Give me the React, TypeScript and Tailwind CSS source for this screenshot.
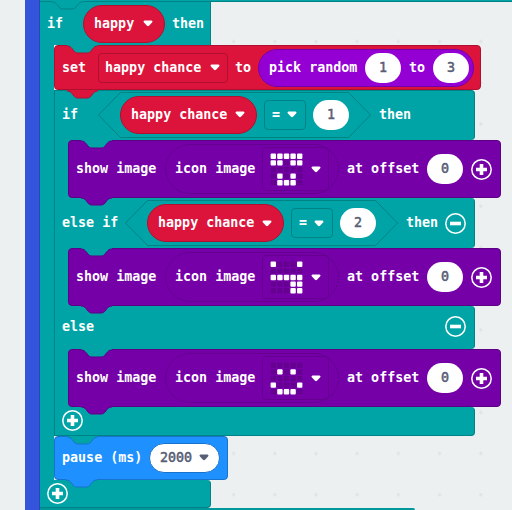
import React from "react";

type Kids = { children?: React.ReactNode };

function Tab({ fill, stroke }: { fill: string; stroke: string }) {
  return (
    <svg className="absolute -top-px left-3 z-10" width="32" height="10" viewBox="0 0 32 10">
      <path
        d="M0 1 C3 1 3.500 2 5 3.500 L7 6 C8 7.300 9 8 11 8 H20 C22 8 23 7.300 24 6 L26 3.500 C27.500 2 28 1 31 1 V0 H0 Z"
        fill={fill}
      />
      <path
        d="M0 1 C3 1 3.500 2 5 3.500 L7 6 C8 7.300 9 8 11 8 H20 C22 8 23 7.300 24 6 L26 3.500 C27.500 2 28 1 31 1"
        fill="none"
        stroke={stroke}
      />
    </svg>
  );
}

function Caret() {
  return (
    <svg className="shrink-0" width="10" height="7" viewBox="0 0 10 7">
      <path d="M1.500 .5 H8.500 Q10.200 1 9 2.500 L6 5.800 Q5 6.700 4 5.800 L1 2.500 Q-.2 1 1.500 .5Z" fill="currentColor" />
    </svg>
  );
}

function RoundButton({ plus, className = "" }: { plus?: boolean; className?: string }) {
  return (
    <svg className={"shrink-0 " + className} width="21" height="21" viewBox="0 0 21 21" stroke="white" fill="none">
      <circle cx="10.500" cy="10.500" r="9.700" strokeWidth="1.500" />
      <path d={plus ? "M5 10.500H16M10.500 5V16" : "M5 10.500H16"} strokeWidth="3.600" />
    </svg>
  );
}

function Num({ children, className = "" }: Kids & { className?: string }) {
  return (
    <span
      className={
        "flex h-[30px] w-9 shrink-0 items-center justify-center rounded-full bg-white text-[#575e75] " + className
      }
    >
      <span className="font-normal [-webkit-text-stroke:0.5px_#575e75]">{children}</span>
    </span>
  );
}

function Variable({ children, className }: Kids & { className: string }) {
  return (
    <span
      className={
        "flex h-[38px] shrink-0 items-center justify-between rounded-full border border-[#b0102f] bg-[#dc143c] pr-[11px] pl-[10px] " +
        className
      }
    >
      <span>{children}</span>
      <Caret />
    </span>
  );
}

function Comparison({ value }: { value: string }) {
  return (
    <div className="relative flex h-[46px] w-[273px] shrink-0 items-center pl-[22px]">
      <svg className="absolute inset-0" width="273" height="46" viewBox="0 0 273 46">
        <path d="M22.500 .5H250.500L272.500 23L250.500 45.500H22.500L.5 23Z" fill="#00a4a6" stroke="#008385" />
      </svg>
      <div className="relative flex items-center">
        <Variable className="w-[137px]">happy chance</Variable>
        <span className="ml-[7px] flex h-[30px] w-[42px] items-center justify-between rounded-[4px] border border-[#008385] pr-2 pl-[7px]">
          <span>=</span>
          <Caret />
        </span>
        <Num className="ml-[7px]">{value}</Num>
      </div>
    </div>
  );
}

function LedIcon({ rows }: { rows: string[] }) {
  return (
    <svg className="shrink-0" width="33" height="33" viewBox="0 0 33 33">
      {rows.map((row, y) =>
        row.split("").map((led, x) => (
          <rect
            key={`${x}-${y}`}
            x={0.6 + x * 6.6}
            y={0.6 + y * 6.6}
            width="5.400"
            height="5.400"
            rx="1"
            fill={led === "1" ? "#ffffff" : "#650091"}
          />
        )),
      )}
    </svg>
  );
}

function ShowImage({ rows }: { rows: string[] }) {
  return (
    <div className="relative ml-[13px] flex h-full w-[433px] items-center rounded-[4px] border border-[#5c0085] bg-[#7600a8] pl-[7px]">
      <Tab fill="#00a4a6" stroke="#5c0085" />
      <span className="w-[81px] shrink-0">show image</span>
      <div className="ml-2 flex h-[50px] w-[174px] shrink-0 items-center rounded-full border border-[#650091] pl-[9px]">
        <span className="w-[81px] shrink-0">icon image</span>
        <div className="ml-[6px] flex h-[44px] w-[67px] items-center justify-between rounded-[4px] border border-[#650091] pr-[7px] pl-[7px]">
          <LedIcon rows={rows} />
          <Caret />
        </div>
      </div>
      <span className="ml-2 w-[73px] shrink-0">at offset</span>
      <Num className="ml-[7px]">0</Num>
      <RoundButton plus className="ml-2" />
    </div>
  );
}

export default function App() {
  return (
    <main
      className="relative isolate flex h-[510px] w-[512px] overflow-hidden bg-[#ecf0f1] pl-[25px] text-[13.35px] leading-none font-bold whitespace-pre text-white"
      style={{ fontFamily: '"DejaVu Sans Mono", "Liberation Mono", monospace' }}
    >
      <svg className="absolute inset-0 -z-10" width="512" height="510">
        <defs>
          <pattern id="dots" x="7" y="20.900" width="41.200" height="41.200" patternUnits="userSpaceOnUse">
            <path d="M18.600 20.600h4M20.600 18.600v4" stroke="#dde1e3" strokeWidth="1.200" />
          </pattern>
        </defs>
        <rect width="512" height="510" fill="url(#dots)" />
      </svg>

      <div className="h-full w-[15px] shrink-0 border-r border-[#2a45b5] bg-[#3455db]" />

      <div className="flex w-[472px] shrink-0 flex-col">
        <div className="h-[2px] border-b border-[#008385] bg-[#00a4a6]" />

        <div className="relative flex h-[43px] w-[171px] items-center border-r border-[#008385] bg-[#00a4a6] pl-[7px]">
          <Tab fill="#00a4a6" stroke="#008385" />
          <span className="w-4">if</span>
          <Variable className="ml-5 w-[82px]">happy</Variable>
          <span className="ml-[7px]">then</span>
        </div>

        <div className="flex h-[435px]">
          <div className="w-[14px] shrink-0 bg-[#00a4a6]" />
          <div className="flex flex-col">
            <div className="relative flex h-[45px] w-[427px] items-center rounded-[4px] border border-[#b0102f] bg-[#dc143c] pl-[7px]">
              <Tab fill="#00a4a6" stroke="#b0102f" />
              <span className="w-6">set</span>
              <span className="ml-3 flex h-[30px] w-[130px] items-center justify-between rounded-[4px] border border-[#b0102f] pr-[7px] pl-[6px]">
                <span>happy chance</span>
                <Caret />
              </span>
              <span className="ml-[7px] w-4">to</span>
              <div className="ml-[7px] flex h-[38px] w-[216px] items-center rounded-full border border-[#7600a8] bg-[#9400d3] pl-[10px]">
                <span className="w-[89px]">pick random</span>
                <Num className="ml-[7px]">1</Num>
                <span className="ml-2 w-4">to</span>
                <Num className="ml-2">3</Num>
              </div>
            </div>

            <div className="flex h-[346px] flex-col">
              <div className="relative flex h-[50px] w-[421px] items-center rounded-tr-[4px] rounded-br-[4px] border border-b-0 border-[#008385] bg-[#00a4a6] pb-[2px] pl-[7px]">
                <Tab fill="#dc143c" stroke="#b0102f" />
                <span className="w-4">if</span>
                <div className="ml-5"><Comparison value="1" /></div>
                <span className="ml-2">then</span>
              </div>
              <div className="h-[58px] w-[421px] border-l border-[#008385] bg-[#00a4a6]">
                <ShowImage rows={["11111", "11011", "00000", "01010", "01110"]} />
              </div>

              <div className="relative flex h-[50px] w-[421px] items-center rounded-r-[4px] border-r border-l border-[#008385] bg-[#00a4a6] pl-[7px]">
                <div className="absolute top-0 left-[14px]">
                  <Tab fill="#7600a8" stroke="#5c0085" />
                </div>
                <span className="w-[57px]">else if</span>
                <div className="ml-[6px]"><Comparison value="2" /></div>
                <span className="ml-2 w-[33px]">then</span>
                <RoundButton className="ml-[6px]" />
              </div>
              <div className="h-[58px] w-[421px] border-l border-[#008385] bg-[#00a4a6]">
                <ShowImage rows={["10001", "00000", "11111", "00011", "00011"]} />
              </div>

              <div className="relative flex h-[43px] w-[421px] items-center justify-between rounded-r-[4px] border-r border-l border-[#008385] bg-[#00a4a6] pr-2 pb-[2px] pl-[7px]">
                <div className="absolute top-0 left-[14px]">
                  <Tab fill="#7600a8" stroke="#5c0085" />
                </div>
                <span>else</span>
                <RoundButton />
              </div>
              <div className="h-[58px] w-[421px] border-l border-[#008385] bg-[#00a4a6]">
                <ShowImage rows={["00000", "01010", "00000", "10001", "01110"]} />
              </div>
              <div className="relative flex h-[29px] w-[421px] items-center rounded-r-[4px] border border-t-0 border-[#008385] bg-[#00a4a6] pb-px pl-[7px]">
                <div className="absolute top-0 left-[14px]">
                  <Tab fill="#7600a8" stroke="#5c0085" />
                </div>
                <RoundButton plus />
              </div>
            </div>

            <div className="relative flex h-11 w-[174px] items-center rounded-[4px] border border-[#1873cc] bg-[#1e90ff] pb-px pl-[7px]">
              <Tab fill="#00a4a6" stroke="#1873cc" />
              <span className="w-[81px]">pause (ms)</span>
              <span className="ml-[6px] flex h-[30px] w-[71px] items-center justify-between rounded-full border border-[#1873cc] bg-white pr-[10px] pl-[10px] text-[#575e75]">
                <span className="font-normal [-webkit-text-stroke:0.5px_#575e75]">2000</span>
                <Caret />
              </span>
            </div>
          </div>
        </div>

        <div className="relative flex h-[28px] w-[171px] items-center rounded-r-[4px] border-r border-b border-[#008385] bg-[#00a4a6] pl-[7px]">
          <div className="absolute top-0 left-[14px]">
            <Tab fill="#1e90ff" stroke="#1873cc" />
          </div>
          <RoundButton plus />
        </div>
        <div className="h-[2px] w-[375px] rounded-tr-[4px] bg-[#00999b]" />
      </div>
    </main>
  );
}
